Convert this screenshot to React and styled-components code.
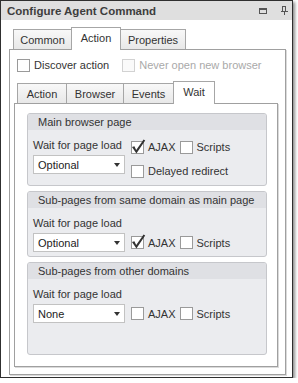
import React from "react";
import styled, { createGlobalStyle } from "styled-components";

const GlobalStyle = createGlobalStyle`
  html, body {
    margin: 0;
    padding: 0;
    background: #fff;
  }
  body {
    font-family: "Liberation Sans", Arial, sans-serif;
    font-size: 11px;
    color: #333;
  }
  * {
    box-sizing: border-box;
  }
`;

const Window = styled.div`
  width: 293px;
  height: 378px;
  border: 1px solid #2f2f2f;
  box-shadow: 2px 2px 3px rgba(0, 0, 0, 0.45);
  background: #fff;
  display: flex;
  flex-direction: column;
`;

const TitleBar = styled.div`
  flex: none;
  height: 19px;
  display: flex;
  align-items: center;
  padding: 0 4px 0 6px;
  background: #dfdfdf;
`;

const Title = styled.div`
  flex: 1;
  font-weight: bold;
  font-size: 11.5px;
  color: #3d3d3d;
`;

const TitleButtons = styled.div`
  display: flex;
  align-items: center;
  gap: 14px;
  color: #555;
`;

const Body = styled.div`
  flex: 1;
  display: flex;
  flex-direction: column;
  padding: 7px 6px 2px 8px;
`;

const TabControl = styled.div`
  flex: 1;
  display: flex;
  flex-direction: column;
  margin: ${(p) => p.$margin || "0"};
`;

const TabStrip = styled.div`
  flex: none;
  height: 22px;
  display: flex;
  align-items: flex-end;
  padding-left: ${(p) => p.$indent}px;
  position: relative;
  z-index: 1;
`;

const Tab = styled.div`
  width: ${(p) => p.$w}px;
  height: ${(p) => (p.$active ? 23 : 20)}px;
  margin-bottom: ${(p) => (p.$active ? -1 : 0)}px;
  margin-left: -1px;
  padding-bottom: ${(p) => (p.$active ? 3 : 0)}px;
  border: 1px solid #a6a6a6;
  border-bottom: none;
  background: ${(p) =>
    p.$active ? "#fff" : "linear-gradient(#f8f8f8, #e8e8e8)"};
  display: flex;
  align-items: center;
  justify-content: center;
  position: relative;
  z-index: ${(p) => (p.$active ? 2 : 1)};
  color: #333;
  white-space: nowrap;

  &:first-child {
    margin-left: 0;
  }
`;

const Panel = styled.div`
  flex: 1;
  display: flex;
  flex-direction: column;
  gap: ${(p) => p.$gap || 0}px;
  padding: ${(p) => p.$pad || "0"};
  border: 1px solid #a0a0a0;
  background: #fff;
  box-shadow: 1px 1px 0 #dadada;
`;

const OptionsRow = styled.div`
  display: flex;
  align-items: center;
  gap: 13px;
  height: 16px;
  margin: 7px 0 0 7px;
`;

const GroupBox = styled.div`
  flex: ${(p) => (p.$grow ? 1 : "none")};
  border: 1px solid #c6c7cb;
  border-radius: 3px;
  background: #ebecef;
  overflow: hidden;
`;

const GroupHeader = styled.div`
  height: 16px;
  display: flex;
  align-items: center;
  padding-left: 10px;
  background: #dfe0e4;
  color: #333;
`;

const GroupBody = styled.div`
  display: flex;
  flex-direction: ${(p) => (p.$row ? "row" : "column")};
  gap: ${(p) => (p.$row ? 6 : 2)}px;
  padding: 7px 5px 4px 5px;
`;

const Column = styled.div`
  display: flex;
  flex-direction: column;
  gap: ${(p) => p.$gap}px;
`;

const FieldLabel = styled.div`
  height: 16px;
  line-height: 16px;
  white-space: nowrap;
`;

const FieldRow = styled.div`
  display: flex;
  align-items: center;
  gap: 6px;
  height: ${(p) => (p.$h ? `${p.$h}px` : "auto")};
`;

const CheckList = styled.div`
  display: flex;
  align-items: center;
  gap: 4px;
`;

const Select = styled.div`
  width: 92px;
  height: 19px;
  flex: none;
  display: flex;
  align-items: center;
  justify-content: space-between;
  padding: 0 4px 0 4px;
  border: 1px solid #c2c2c2;
  background: #fff;
  color: #222;
`;

const Caret = styled.span`
  width: 0;
  height: 0;
  border-left: 3.5px solid transparent;
  border-right: 3.5px solid transparent;
  border-top: 4px solid #333;
`;

const CheckLabel = styled.label`
  display: flex;
  align-items: center;
  gap: 4px;
  white-space: nowrap;
  color: ${(p) => (p.$disabled ? "#a9a9a9" : "#333")};
`;

const Box = styled.span`
  position: relative;
  width: 13px;
  height: 13px;
  flex: none;
  border: 1px solid ${(p) => (p.$disabled ? "#d2d2d2" : "#9a9a9a")};
  background: ${(p) => (p.$disabled ? "#fafafa" : "#fff")};
`;

const Tick = styled.svg`
  position: absolute;
  left: -1px;
  top: -4px;
`;

const Check = ({ label, checked, disabled }) => (
  <CheckLabel $disabled={disabled}>
    <Box $disabled={disabled}>
      {checked && (
        <Tick width="15" height="17" viewBox="0 0 15 17">
          <polygon
            points="1,9 3.4,8.2 5.2,12 12.6,1.6 14.2,2.4 5.4,15.4"
            fill="#333"
          />
        </Tick>
      )}
    </Box>
    {label}
  </CheckLabel>
);

const Dropdown = ({ value }) => (
  <Select>
    {value}
    <Caret />
  </Select>
);

const RestoreIcon = () => (
  <svg width="8" height="6" viewBox="0 0 8 6">
    <rect x="0.5" y="0.5" width="7" height="5" fill="none" stroke="#555" />
    <rect x="0" y="0" width="8" height="2" fill="#555" />
  </svg>
);

const PinIcon = () => (
  <svg width="7" height="9" viewBox="0 0 7 9">
    <rect x="1.5" y="0.5" width="3" height="5" fill="none" stroke="#555" />
    <rect x="0" y="5" width="7" height="1" fill="#555" />
    <rect x="3" y="6" width="1" height="3" fill="#555" />
  </svg>
);

const App = () => {
  return (
    <>
      <GlobalStyle />
      <Window>
        <TitleBar>
          <Title>Configure Agent Command</Title>
          <TitleButtons>
            <RestoreIcon />
            <PinIcon />
          </TitleButtons>
        </TitleBar>

        <Body>
          <TabControl>
            <TabStrip $indent={4}>
              <Tab $w={59}>Common</Tab>
              <Tab $w={50} $active>
                Action
              </Tab>
              <Tab $w={66}>Properties</Tab>
            </TabStrip>

            <Panel>
              <OptionsRow>
                <Check label="Discover action" />
                <Check label="Never open new browser" disabled />
              </OptionsRow>

              <TabControl $margin="8px 7px 7px 4px">
                <TabStrip $indent={3}>
                  <Tab $w={50}>Action</Tab>
                  <Tab $w={58}>Browser</Tab>
                  <Tab $w={51}>Events</Tab>
                  <Tab $w={42} $active>
                    Wait
                  </Tab>
                </TabStrip>

                <Panel $pad="9px 10px 11px 12px" $gap={5}>
                  <GroupBox>
                    <GroupHeader>Main browser page</GroupHeader>
                    <GroupBody $row>
                      <Column $gap={2}>
                        <FieldLabel>Wait for page load</FieldLabel>
                        <Dropdown value="Optional" />
                      </Column>
                      <Column $gap={4}>
                        <FieldRow $h={20}>
                          <CheckList>
                            <Check label="AJAX" checked />
                            <Check label="Scripts" />
                          </CheckList>
                        </FieldRow>
                        <FieldRow $h={20}>
                          <Check label="Delayed redirect" />
                        </FieldRow>
                      </Column>
                    </GroupBody>
                  </GroupBox>

                  <GroupBox>
                    <GroupHeader>Sub-pages from same domain as main page</GroupHeader>
                    <GroupBody>
                      <FieldLabel>Wait for page load</FieldLabel>
                      <FieldRow>
                        <Dropdown value="Optional" />
                        <CheckList>
                          <Check label="AJAX" checked />
                          <Check label="Scripts" />
                        </CheckList>
                      </FieldRow>
                    </GroupBody>
                  </GroupBox>

                  <GroupBox $grow>
                    <GroupHeader>Sub-pages from other domains</GroupHeader>
                    <GroupBody>
                      <FieldLabel>Wait for page load</FieldLabel>
                      <FieldRow>
                        <Dropdown value="None" />
                        <CheckList>
                          <Check label="AJAX" />
                          <Check label="Scripts" />
                        </CheckList>
                      </FieldRow>
                    </GroupBody>
                  </GroupBox>
                </Panel>
              </TabControl>
            </Panel>
          </TabControl>
        </Body>
      </Window>
    </>
  );
};

export default App;
